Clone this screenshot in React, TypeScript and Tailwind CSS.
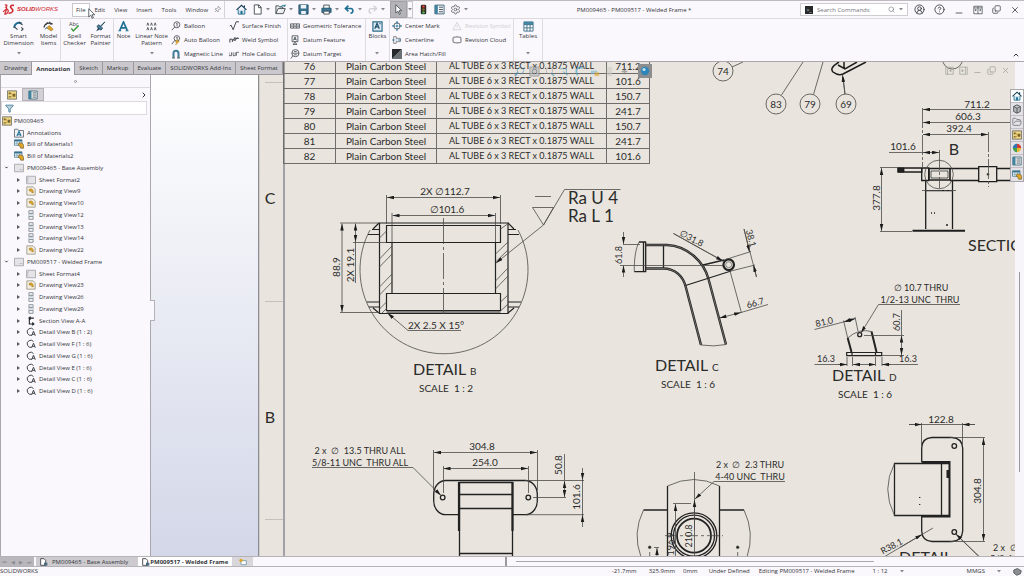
import { useState } from "react";
import type { ReactNode } from "react";
import { ChevronDown, ChevronRight, ChevronUp, CircleUserRound, CircleHelp, Copy, Filter, FolderOpen, Minus, Pin, Search, Settings, X } from "lucide-react";
import clsx from "clsx";

const BLUE = "#1f6f93";
const INK = "#444b52";
const GOLD = "#e0a526";

/* ---------- icons ---------- */

function Svg({ children, className = "size-[11px]" }: { children: ReactNode; className?: string }) {
  return (
    <svg viewBox="0 0 12 12" fill="none" stroke={INK} className={clsx("shrink-0", className)} aria-hidden="true">
      {children}
    </svg>
  );
}

const Caret = () => (
  <svg viewBox="0 0 4 3" className="w-[4px] h-[3px] shrink-0" aria-hidden="true"><path d="M0 0h4L2 2.6z" fill="#85888e" /></svg>
);

const HomeIcon = ({ className }: { className?: string }) => (
  <Svg className={className}>
    <path d="M2.4 6v5h7.2V6" fill="#d4e4ec" stroke={BLUE} />
    <path d="M.6 6.4 6 1.4l5.4 5M9.2 1.5v2" stroke="#173f56" strokeWidth="1.3" />
    <path d="M4.9 7.6h2.2V11H4.9z" fill={BLUE} stroke="none" />
  </Svg>
);
const NewIcon = () => <Svg><path d="M2.5 1h5L10 3.500V11H2.500zM7.200 1v3H10" fill="#fff" /></Svg>;
const OpenIcon = () => (
  <Svg>
    <path d="M1 10.500V2h3l1 1.200h3.500V5M1 10.500h8L11.200 5H3.400z" fill="#eceef0" />
    <path d="M6 3.500c1-2 3-2.500 4.800-1.500M11 .6v1.800H9.200" stroke={BLUE} />
  </Svg>
);
const SaveIcon = () => (
  <Svg>
    <path d="M1 1h10v10H1z" fill="#3a7390" stroke="#234f66" />
    <path d="M3 1h6v4H3zM3.500 7.500h5V11h-5z" fill="#eef4f7" stroke="none" />
  </Svg>
);
const PrintIcon = () => (
  <Svg>
    <path d="M3 5V1.200h6V5" fill="#fff" />
    <path d="M1 4.600h10v4.600H1z" fill="#3d7896" stroke="#24536b" />
    <path d="M3 7.800h6V11H3z" fill="#fff" />
  </Svg>
);
const UndoIcon = () => <Svg><path d="M2 5h5.500c3 0 3 5-.5 5M4.800 1.800 1.500 5l3.300 3" stroke={BLUE} strokeWidth="1.700" /></Svg>;
const RedoIcon = () => <Svg><path d="M10 5H4.500c-3 0-3 5 .5 5M7.200 1.800 10.500 5 7.200 8" stroke="#d0d0d4" strokeWidth="1.500" /></Svg>;
const PointerIcon = ({ className }: { className?: string }) => (
  <Svg className={className}><path d="M3 .8v9l2.200-2 1.500 3.500 1.400-.6-1.500-3.400h3z" fill="#fff" strokeWidth=".9" /></Svg>
);
const TrafficIcon = () => (
  <Svg>
    <rect x="3" y=".7" width="6" height="10.600" rx="1.500" fill="#2c2c2c" stroke="none" />
    <circle cx="6" cy="2.800" r="1.400" fill="#e03a2d" stroke="none" />
    <circle cx="6" cy="6" r="1.400" fill="#8a6c2d" stroke="none" />
    <circle cx="6" cy="9.200" r="1.400" fill="#4eb14a" stroke="none" />
  </Svg>
);
const PropsIcon = ({ className }: { className?: string }) => (
  <Svg className={className}>
    <path d="M1 1.200h10v9.600H1z" fill="#f2f6f8" stroke="#3e6478" />
    <path d="M1 1.200h3.200v9.600H1z" fill="#41839f" stroke="none" />
    <path d="M5.500 3.500h4.300M5.500 6h4.300M5.500 8.500h4.300" />
  </Svg>
);
const SpanIcon = () => <Svg className="size-[10px]"><path d="M1 1.500h10v9H1zM6 1.500v9M2.500 6h2M7.500 6h2M1 3.500h10M3.700 5 2.500 6l1.200 1M8.300 5l1.200 1-1.200 1" strokeWidth=".9" /></Svg>;
const PaneIcon = ({ flip }: { flip?: boolean }) => (
  <Svg className={clsx("size-[9px]", flip && "-scale-x-100")}><path d="M1 1.500h10v9.500H1zM3.500 1.500V11" stroke="#a3a19d" /><path d="M8.500 4 5.500 6.200l3 2.200z" fill="#a3a19d" stroke="none" /></Svg>
);
const DimensionIcon = () => (
  <Svg>
    <path d="M1.500 7.500A5 5 0 0 1 9.500 3" stroke={BLUE} strokeWidth="2.200" />
    <path d="m1 6 4 3.500M6.500 1l4 3.500M9 7l2 1.800-2 1.800" strokeWidth="1.200" />
  </Svg>
);
const ModelItemsIcon = () => (
  <Svg>
    <path d="M1 7C2 2.500 6 1 10.500 3.500" stroke="#30363c" strokeWidth="1.500" />
    <path d="m3 4 2-2.500M7 1l2 3" strokeWidth="1.300" />
    <path d="M4 7.500 7 5l4 4-2 2z" fill={GOLD} stroke="#806120" strokeWidth=".6" />
    <path d="m2 9 2.500-2" stroke={BLUE} />
  </Svg>
);
const SpellIcon = () => (
  <svg viewBox="0 0 12 12" className="size-[11px] shrink-0" aria-hidden="true">
    <text x="0" y="5" fontSize="6" fill="#3c4248">Abc</text>
    <path d="m2.500 8 2.200 2.800L10.500 5" fill="none" stroke="#3a9a38" strokeWidth="1.600" />
  </svg>
);
const PainterIcon = () => (
  <Svg>
    <path d="M10.800 1 6 5.500 4 4.200 2 6l4.500 4 1.700-2.200L6.500 6z" fill="#467f9c" stroke="#2b4c60" />
    <path d="m3.500 7-2.200 4.300 4-2" fill="#28465a" stroke="none" />
  </Svg>
);
const NoteIcon = () => (
  <Svg>
    <path d="M1.800 10.500 6 1l4.200 9.500M3.500 7.500h5" stroke={BLUE} strokeWidth="1.800" />
    <path d="M.4 10.700h3.200M8.200 10.700h3.400" stroke={BLUE} />
  </Svg>
);
const PatternIcon = () => (
  <Svg>
    <path d="m1 5 1-3 1 3M5 5l1-3 1 3M9 5l1-3 1 3M1 10l1-3 1 3M5 10l1-3 1 3M9 10l1-3 1 3" strokeWidth=".9" />
  </Svg>
);
const BalloonIcon = () => (
  <Svg className="size-[10px]"><circle cx="7" cy="4.500" r="3.600" /><path d="M4.500 7.200 1 11M6.400 3.300l.9-.7v4" /></Svg>
);
const AutoBalloonIcon = () => (
  <Svg className="size-[10px]">
    <circle cx="7" cy="4" r="3.300" />
    <path d="M4.500 6.500 1 11M6.400 3l.9-.7v3.500" />
    <path d="m8 5.500-3 3h2L5.500 12 10 7.500H8z" fill={GOLD} stroke="#b87f10" strokeWidth=".5" />
  </Svg>
);
const MagnetIcon = () => (
  <Svg className="size-[10px]">
    <path d="M3 10V5a3 3 0 0 1 6 0v5" stroke="#3f7c99" strokeWidth="2.400" />
    <path d="M1.500 10.500h3M7.500 10.500h3" strokeWidth="1.500" />
  </Svg>
);
const SurfaceIcon = () => <Svg className="size-[10px]"><path d="m1 6 1.500-1L5 10.500 8.500 1H12" strokeWidth="1.200" /></Svg>;
const WeldIcon = () => <Svg className="size-[10px]"><path d="M1 9V5h3v3l3-5v4l3-4M7 4h5" strokeWidth="1.200" /></Svg>;
const HoleIcon = () => <Svg className="size-[10px]"><path d="M0 4v4h3V4M5 4v4h2.500V4M9 8V4h3" strokeWidth=".9" /></Svg>;
const GeoTolIcon = () => (
  <Svg className="size-[10px]"><path d="M.5 3.500h11v5H.5zM4 3.500v5M8 3.500v5" /><path d="M1.500 6h1.500M5 6h2M9 6h1.500" strokeWidth="1.500" /></Svg>
);
const DatumIcon = () => (
  <Svg className="size-[10px]"><path d="M2.500 1h7v7h-7zM6 8v1.500M3.500 11.300h5L6 9z" /><path d="m4.200 6.500 1.800-4 1.800 4M5 5.200h2" strokeWidth="1.100" /></Svg>
);
const TargetIcon = () => <Svg className="size-[10px]"><circle cx="6.500" cy="5" r="4.300" /><path d="M2.200 5h8.600M3.500 8 1 11.500M5 3h3M5 7h3" /></Svg>;
const BlocksIcon = () => (
  <Svg>
    <path d="M1 1h10v10H1z" fill="#dceaf1" stroke="#2d6c8b" strokeWidth="1.300" />
    <path d="m3 8.500 2.500-6 2.500 6M4 6.500h3M8 3h1.500" stroke="#1c4d68" strokeWidth="1.300" />
  </Svg>
);
const CenterMarkIcon = () => (
  <Svg className="size-[10px]"><circle cx="6" cy="6" r="3.800" /><path d="M6 0v4M6 8v4M0 6h4M8 6h4M5 6h2M6 5v2" stroke={BLUE} strokeWidth="1.200" /></Svg>
);
const CenterlineIcon = () => (
  <Svg className="size-[10px]"><path d="M2 2v8M2 2h3v2h5v4H5v2H2" stroke="#70757a" /><path d="M0 6h3M4.500 6h1M7 6h4" stroke={BLUE} /></Svg>
);
const HatchIcon = () => (
  <Svg className="size-[10px]"><path d="M0 0h12v12H0z" fill="#26292c" stroke="none" /><path d="M12 0v12H0z" fill="#6b7074" stroke="none" /><path d="M0 12 12 0" stroke="#9da2a6" strokeWidth=".6" /></Svg>
);
const RevSymbolIcon = () => <Svg className="size-[10px]"><path d="M6 1.500 11 10.500H1zM6 5v3" stroke="#d0d0d4" /></Svg>;
const CloudIcon = () => <Svg className="size-[10px]"><path d="M1.500 3c1-1 2 0 3-.5s2-.5 3 0 2-.5 3 .5c.6 1 0 2 .2 3s.4 2-.4 3c-1 .6-2 0-3 .3s-2 .4-3 0-2 .4-2.700-.5C1 7.800 1.300 7 1.300 6S.9 4 1.500 3z" /></Svg>;
const TablesIcon = () => (
  <Svg>
    <path d="M1 1h10v10H1z" fill="#fff" stroke="#3d6f88" />
    <path d="M1 1h10v3H1z" fill="#4487a5" stroke="none" />
    <path d="M1 4h10M1 7.500h10M4.300 4v7M7.700 4v7" stroke="#3d6f88" />
  </Svg>
);
const SheetRootIcon = ({ className = "size-[10px]" }: { className?: string }) => (
  <Svg className={className}>
    <path d="M.5 1h11v10H.5z" fill="#ecd484" stroke="#6b6a60" />
    <path d="M2 3h2.500v2H2zM2 7.500h2.500v1.500H2zM7 4.500h3V8H7z" fill="#77632f" stroke="none" />
    <path d="M4.500 4c2 0 1 2.500 2.500 2.500M4.500 8c1.500 0 1.500-1 2.500-1.500" stroke="#b5882a" />
  </Svg>
);
const AnnotationsIcon = () => (
  <Svg className="size-[10px]"><path d="M.6 1.500h4l1 1.500h5.800v8H.6z" fill="#eef2f5" stroke="#60666c" /><path d="M3.500 9.500 6 4l2.500 5.500M4.500 8h3" stroke={BLUE} strokeWidth="1.300" /></Svg>
);
const BomIcon = ({ className = "size-[10px]" }: { className?: string }) => (
  <Svg className={className}>
    <path d="M.6 1h9v6.500h-9z" fill="#fff" stroke="#4b7d96" />
    <path d="M.6 1h9v2h-9z" fill="#35708d" stroke="none" />
    <path d="M3.500 3v4M6.500 3v4M.6 5h9" stroke="#4b7d96" strokeWidth=".7" />
    <path d="M6 5c3-1 5.500.5 5.500 3v3H8c-.5-2-1-3-3-3.500z" fill={GOLD} stroke="#6b5a2c" strokeWidth=".8" />
  </Svg>
);
const SheetIcon = () => <Svg className="size-[10px]"><path d="M.6 1.500h10.800v9H.6z" fill="#e4e3e6" stroke="#a4a3a8" /><path d="M6.500 8h4" stroke="#b8b7bb" /></Svg>;
const FormatIcon = () => <Svg className="size-[10px]"><path d="M.6 1.500h10.800v9H.6z" fill="#e4e3e6" stroke="#a4a3a8" /><path d="M2 9V3.500h1.500" stroke="#b8b7bb" /></Svg>;
const ModelViewIcon = () => (
  <Svg className="size-[10px]"><path d="M1 1h7.500L11 3.500V11H1z" fill="#f5eede" stroke="#98958c" /><path d="M4 4c3-1.500 5 .5 4.800 4L7 8c0-1-1-2-3-2z" fill={GOLD} stroke="#8a6b22" strokeWidth=".6" /></Svg>
);
const ProjectedIcon = () => (
  <Svg className="size-[10px]"><path d="M3.500.8h5v3.500h-5zM3.500 7.700h5v3.500h-5z" fill="#f2f4f6" stroke="#80868b" /><path d="M6 3v6M3.500 4.500v3M8.500 4.500v3" stroke="#6f8f9f" strokeDasharray="1 1" /></Svg>
);
const SectionIcon = () => <Svg className="size-[10px]"><path d="M9.500 2.500H4v7h5.500M5.500.8 3.500 2.500l2 1.700M7.500 7.800l2 1.700-2 1.700" stroke="#22272b" strokeWidth="1.300" /></Svg>;
const DetailIcon = () => (
  <Svg className="size-[10px]"><path d="M7 9.900A4.300 4.300 0 1 1 9 3" stroke="#33383c" strokeWidth="1.100" /><path d="m6.800 10.500 2.200-5.500 2.200 5.500M7.600 8.800h2.800" stroke="#33383c" strokeWidth="1.100" /></Svg>
);
const SheetTabIcon = () => (
  <Svg className="size-[8px]"><path d="M1 1h5l2.500 2.500V11H1z" fill="#fff" stroke="#3a3e42" strokeWidth="1.300" /><path d="M6 7h5v4.500H6z" fill="#4a6b7d" stroke="none" /></Svg>
);

function Logo() {
  return (
    <a href="#" className="flex items-center gap-[2px] text-[#cf2b30]">
      <svg viewBox="0 0 14 12" className="w-[13px] h-[11px]" fill="none" stroke="currentColor" strokeWidth="1.300" aria-hidden="true">
        <path d="M3 1.200c2-.8 3.500.3 1 2.300C6 4 5 6 1 8.500" />
        <path d="M5 5.500 3 11c3 .5 5.500-4.500 2-5.500z" />
        <path d="M13 1.500C9 1 8 3 10.500 5s1 5-3.500 5" strokeWidth="1.700" />
      </svg>
      <span className="text-[6px] leading-[9px] italic font-[Liberation_Sans]"><b>SOLID</b>WORKS</span>
    </a>
  );
}

/* ---------- title bar ---------- */

const menus = ["File", "Edit", "View", "Insert", "Tools", "Window"];

function Quick({ label, caret, children }: { label: string; caret?: boolean; children: ReactNode }) {
  return (
    <button aria-label={label} className="flex items-center gap-[3px]">
      {children}
      {caret && <Caret />}
    </button>
  );
}

function TitleBar() {
  return (
    <header className="flex items-center h-[19px] border-y border-t-[#bdbbc0] border-b-[#dddbe0] pl-[2px] pr-1">
      <Logo />
      <nav className="relative flex items-center gap-px ml-[14px]">
        {menus.map((m) => (
          <button key={m} className={clsx("px-[3px] h-[14px] border", m === "File" ? "border-[#c9c7cc] bg-white" : "border-transparent")}>{m}</button>
        ))}
        <PointerIcon className="absolute left-[14px] top-[5px] size-[11px]" />
        <Pin className="size-[7px] ml-px rotate-45 text-[#6d7177]" />
      </nav>
      <div className="flex items-center gap-[5px] ml-[3px] pl-[11px] border-l border-[#d5d3d8] h-full">
        <Quick label="Home"><HomeIcon /></Quick>
        <Quick label="New" caret><NewIcon /></Quick>
        <Quick label="Open" caret><OpenIcon /></Quick>
        <Quick label="Save" caret><SaveIcon /></Quick>
        <Quick label="Print" caret><PrintIcon /></Quick>
        <Quick label="Undo" caret><UndoIcon /></Quick>
        <Quick label="Redo" caret><RedoIcon /></Quick>
        <button aria-label="Select" className="flex items-center h-[17px]">
          <span className="flex h-full items-center bg-[#b4b3b7] border border-[#a3a2a6] px-[2px]"><PointerIcon /></span>
          <span className="flex h-full items-center border border-[#c8c6cb]"><Caret /></span>
        </button>
        <Quick label="Rebuild"><TrafficIcon /></Quick>
        <Quick label="File Properties"><PropsIcon /></Quick>
        <Quick label="Options" caret><Settings className="size-[11px] text-[#6b6f75]" /></Quick>
      </div>
      <h1 className="flex-1 text-center">PM009465 - PM009517 - Welded Frame *</h1>
      <label className="flex items-center gap-1 w-[108px] h-[13px] px-1 border border-[#cfcdd2] bg-white">
        <span className="size-[8px] bg-[#26292c] text-white text-[5px] leading-[8px] text-center">&gt;_</span>
        <input aria-label="Search Commands" placeholder="Search Commands" className="flex-1 min-w-0 outline-none placeholder:text-[#77757c]" />
        <Search className="size-[7px] text-[#6d7177]" />
        <Caret />
      </label>
      <div className="flex items-center gap-[9px] ml-[6px] text-[#3f4348]">
        <button aria-label="Account"><CircleUserRound className="size-[11px]" /></button>
        <button aria-label="Help"><CircleHelp className="size-[11px]" /></button>
        <button aria-label="Minimize"><Minus className="size-[10px] translate-y-[3px]" /></button>
        <button aria-label="Span displays"><SpanIcon /></button>
        <button aria-label="Restore"><Copy className="size-[9px] -scale-y-100" /></button>
        <button aria-label="Close"><X className="size-[10px]" /></button>
      </div>
    </header>
  );
}

/* ---------- ribbon ---------- */

function BigTool({ icon, lines, caret, className }: { icon: ReactNode; lines: string[]; caret?: boolean; className?: string }) {
  return (
    <button className={clsx("relative flex flex-col items-center leading-[7px] pt-[2px] h-full", className)}>
      {icon}
      <span className="mt-[1px]">{lines.map((l) => <span key={l} className="block whitespace-nowrap">{l}</span>)}</span>
      {caret && <span className="mt-auto mb-[6px]"><Caret /></span>}
    </button>
  );
}

function ToolColumn({ items, className }: { items: [ReactNode, string, boolean?][]; className?: string }) {
  return (
    <div className={clsx("grid grid-rows-3 h-[42px]", className)}>
      {items.map(([icon, label, off]) => (
        <button key={label} disabled={off} className={clsx("flex items-center gap-[3px] whitespace-nowrap", off && "text-[#cfcdd2]")}>
          {icon}{label}
        </button>
      ))}
    </div>
  );
}

function Ribbon() {
  return (
    <div className="relative flex h-[43px] border-b border-[#a9a7ac]">
      <div className="flex w-[61px] border-r border-[#dddbe0]">
        <BigTool className="w-[37px]" icon={<DimensionIcon />} lines={["Smart", "Dimension"]} caret />
        <BigTool className="w-[23px]" icon={<ModelItemsIcon />} lines={["Model", "Items"]} />
      </div>
      <div className="flex w-[53px] border-r border-[#dddbe0]">
        <BigTool className="w-[27px]" icon={<SpellIcon />} lines={["Spell", "Checker"]} />
        <BigTool className="w-[25px]" icon={<PainterIcon />} lines={["Format", "Painter"]} />
      </div>
      <div className="flex w-[174px] border-r border-[#dddbe0]">
        <BigTool className="w-[19px]" icon={<NoteIcon />} lines={["Note"]} />
        <BigTool className="w-[37px]" icon={<PatternIcon />} lines={["Linear Note", "Pattern"]} caret />
        <ToolColumn className="w-[59px] pl-px" items={[[<BalloonIcon />, "Balloon"], [<AutoBalloonIcon />, "Auto Balloon"], [<MagnetIcon />, "Magnetic Line"]]} />
        <ToolColumn items={[[<SurfaceIcon />, "Surface Finish"], [<WeldIcon />, "Weld Symbol"], [<HoleIcon />, "Hole Callout"]]} />
      </div>
      <div className="w-[78px] border-r border-[#dddbe0] pl-[2px]">
        <ToolColumn items={[[<GeoTolIcon />, "Geometric Tolerance"], [<DatumIcon />, "Datum Feature"], [<TargetIcon />, "Datum Target"]]} />
      </div>
      <div className="flex justify-center w-[24px] border-r border-[#dddbe0]">
        <BigTool icon={<BlocksIcon />} lines={["Blocks"]} caret />
      </div>
      <div className="flex w-[124px] border-r border-[#dddbe0] pl-[2px]">
        <ToolColumn className="w-[60px]" items={[[<CenterMarkIcon />, "Center Mark"], [<CenterlineIcon />, "Centerline"], [<HatchIcon />, "Area Hatch/Fill"]]} />
        <ToolColumn items={[[<RevSymbolIcon />, "Revision Symbol", true], [<CloudIcon />, "Revision Cloud"]]} />
      </div>
      <div className="flex justify-center w-[29px] border-r border-[#dddbe0]">
        <BigTool icon={<TablesIcon />} lines={["Tables"]} caret />
      </div>
      <button aria-label="Collapse ribbon" className="ml-auto mt-auto mr-1 mb-[2px]"><ChevronUp className="size-[8px]" strokeWidth={3} /></button>
    </div>
  );
}

const tabs = ["Drawing", "Annotation", "Sketch", "Markup", "Evaluate", "SOLIDWORKS Add-Ins", "Sheet Format"];

function CommandTabs() {
  const [active, setActive] = useState("Annotation");
  return (
    <div role="tablist" className="relative z-10 flex w-max h-[13px]">
      {tabs.map((t) => (
        <button
          key={t}
          role="tab"
          aria-selected={t === active}
          onClick={() => setActive(t)}
          className={clsx("px-[4px] whitespace-nowrap border-r border-[#9b999e]", t === active ? "bg-[#faf8fc] font-bold" : "bg-[#cac8cc] border-b")}
        >
          {t}
        </button>
      ))}
    </div>
  );
}

/* ---------- feature tree ---------- */

type Node = { label: string; icon: ReactNode; level: number; state?: "open" | "closed" };

const views = (names: string[], icon: ReactNode): Node[] => names.map((n) => ({ label: n, icon, level: 2, state: "closed" }));

const tree: Node[] = [
  { label: "PM009465", icon: <SheetRootIcon />, level: 0 },
  { label: "Annotations", icon: <AnnotationsIcon />, level: 1 },
  { label: "Bill of Materials1", icon: <BomIcon />, level: 1 },
  { label: "Bill of Materials2", icon: <BomIcon />, level: 1 },
  { label: "PM009465 - Base Assembly", icon: <SheetIcon />, level: 1, state: "open" },
  ...views(["Sheet Format2"], <FormatIcon />),
  ...views(["Drawing View9", "Drawing View10"], <ModelViewIcon />),
  ...views(["Drawing View12", "Drawing View13", "Drawing View14"], <ProjectedIcon />),
  ...views(["Drawing View22"], <ModelViewIcon />),
  { label: "PM009517 - Welded Frame", icon: <SheetIcon />, level: 1, state: "open" },
  ...views(["Sheet Format4"], <FormatIcon />),
  ...views(["Drawing View23"], <ModelViewIcon />),
  ...views(["Drawing View26", "Drawing View29"], <ProjectedIcon />),
  ...views(["Section View A-A"], <SectionIcon />),
  ...views(["Detail View B (1 : 2)", "Detail View F (1 : 6)", "Detail View G (1 : 6)", "Detail View E (1 : 6)", "Detail View C (1 : 6)", "Detail View D (1 : 6)"], <DetailIcon />),
];

const indent = ["pl-px", "pl-[3px]", "pl-[15px]"];

function TreePanel() {
  return (
    <aside className="relative w-[151px] shrink-0 bg-[#faf8fc] border-x border-[#aaa8ad]">
      <div className="flex justify-center items-center h-[12px]"><span className="size-[3px] rounded-full border border-[#96949a]" /></div>
      <div className="flex h-[14px] border-t border-[#dcdadf]">
        <button aria-label="Feature tree" className="w-[21px] flex justify-center items-center"><SheetRootIcon /></button>
        <button aria-label="Properties" className="w-[22px] flex justify-center items-center bg-[#d2d0d5] border border-[#b4b2b7]"><PropsIcon className="size-[10px]" /></button>
        <button aria-label="More tabs" className="ml-auto mr-[2px]"><ChevronRight className="size-[8px]" strokeWidth={3} /></button>
      </div>
      <label className="flex items-center h-[14px] mr-[3px] pl-[3px] border border-[#dcdadf] bg-white">
        <Filter className="size-[9px] text-[#2d6c8b] fill-[#b9d2de]" />
        <input aria-label="Filter" className="flex-1 min-w-0 outline-none" />
      </label>
      <ul className="grid auto-rows-fr h-[282px]">
        {tree.map((n) => (
          <li key={n.label} className={clsx("flex items-center whitespace-nowrap", indent[n.level])}>
            {n.level > 0 && (
              <span className="w-[10px]">
                {n.state === "open" && <ChevronDown className="size-[5px] fill-[#55595e]" />}
                {n.state === "closed" && <svg viewBox="0 0 3 4" className="w-[3px] h-[4px] ml-px"><path d="M0 0l3 2-3 2z" fill="#55595e" /></svg>}
              </span>
            )}
            {n.icon}
            <span className={n.level ? "ml-[3px]" : "ml-[2px]"}>{n.label}</span>
          </li>
        ))}
      </ul>
      <button aria-label="Collapse panel" className="absolute -right-[5px] top-[225px] w-[5px] h-[21px] border border-l-0 border-[#b4b2b7] bg-[#faf8fc]" />
    </aside>
  );
}

/* ---------- drawing sheet ---------- */

type TextProps = { x: number; y: number; children: ReactNode; r?: number; size?: string; start?: boolean };

function T({ x, y, children, r, size = "text-[10px]", start }: TextProps) {
  return (
    <text x={x} y={y} textAnchor={start ? "start" : "middle"} transform={r ? `rotate(${r} ${x} ${y})` : undefined} className={size} fill="#2b2b2b" stroke="none" xmlSpace="preserve">
      {children}
    </text>
  );
}

const NOTE = "text-[9px]";

const Arrow = ({ d, both }: { d: string; both?: boolean }) => <path d={d} markerEnd="url(#arrow)" markerStart={both ? "url(#arrow)" : undefined} />;

function Caption({ x, y, letter, scale }: { x: number; y: number; letter: string; scale: string }) {
  return (
    <>
      <T x={x} y={y} size="text-[16px]" start>DETAIL <tspan className="text-[10px]">{letter}</tspan></T>
      <T x={x + 6} y={y + 17} start>SCALE  {scale}</T>
    </>
  );
}

function Balloon({ x, y, n }: { x: number; y: number; n: string }) {
  return (
    <>
      <circle cx={x} cy={y} r="10" />
      <T x={x} y={y + 4}>{n}</T>
    </>
  );
}

function DetailB() {
  return (
    <g>
      <path d="M370 230A84 84 0 1 0 518 230" />
      <g strokeWidth="1.200" stroke="#222">
        <path d="M379.500 223H508V313.500H379.500zM386.500 225.500H500.500V242.500H386.500zM392 242.500V293.500M495.500 242.500V293.500M386.500 293.500H500.500V310.500H386.500zM386.500 312H500.500" />
        <path d="M372 229.500h7.500M368 234.500h11.500M508 229.500h8M508 234.500h11M367 302h12.500M369 307h10.500M508 302h13M508 307h11M373 229l6-6M508 223l6 6M373 308l6 5M508 313l6-5" />
      </g>
      <path d="M379.500 238l7-7M379.500 259l12.500-13M379.500 267l12.500-13M379.500 287l12.500-13M379.500 295l12.500-13M379.500 309l7-7M382 313l5-5M500.500 229l7-5M495.500 254l12.500-12M495.500 262l12.500-12M495.500 281l12.500-13M495.500 289l12.500-13M500.500 302l7.500-7M500.500 311l7.500-7" />
      <path d="M443.500 218V317" strokeDasharray="26 3 3 3" />
      <path d="M340 223h39M340 312.500h39M353 242.500h33M386.500 195V224M500.500 195V224M392 213V242M495.500 213V242M355.500 242V283" />
      <Arrow d="M342 223.500V312" both /><Arrow d="M355.500 223.500V242" both />
      <Arrow d="M387 197.500H500" both /><Arrow d="M392.500 215.500H495" both />
      <T x={445} y={195}>2X ∅112.7</T>
      <T x={447} y={213}>∅101.6</T>
      <T x={340} y={267} r={-90}>88.9</T>
      <T x={354} y={265} r={-90}>2X 19.1</T>
      <path d="M535 196.500h16M532.500 207.500h21L543.500 225zM543.500 225 564.500 189.500H620.500" />
      <Arrow d="M543.500 225 496 263" />
      <T x={568} y={204} size="text-[17px]" start>Ra U 4</T>
      <T x={568} y={222} size="text-[17px]" start>Ra L 1</T>
      <path d="M408 330.500h53" /><Arrow d="M408 330.500 387.500 313" />
      <T x={408} y={329} start>2X 2.5 X 15°</T>
      <Caption x={413} y={375} letter="B" scale="1 : 2" />
    </g>
  );
}

function DetailC() {
  return (
    <g>
      <g stroke="#222" strokeWidth="1.300">
        <path d="M645.700 241.700V271.700H634.300M643.500 242V271.500M639 242h7" />
        <path d="M663.500 244.500V269" />
        <path d="M646 245H667C688 246 704 262 708.500 279L726 344.500M646 268.500H663C676 268.500 683 277 685.500 286L701 345" strokeWidth="2.400" />
        <path d="M646 245H667C688 246 704 262 708.500 279L726 344.500M646 268.500H663C676 268.500 683 277 685.500 286L701 345" stroke="#9a9893" strokeWidth=".6" />
        <path d="M685.500 285.500 731 271M703 265 724 260" />
        <circle cx="728.700" cy="264.700" r="5.300" strokeWidth="2.200" />
        <circle cx="728.700" cy="264.700" r="3" strokeWidth=".5" />
      </g>
      <path d="M634.300 271.700C634 258 636 248 639 242M701 345Q714 347 726 344.500M623 244.500h17M620 265.500H723M673.500 233.500 723 261M724 260 751 251.500M731 271 755 265M744 229 756.500 277M730 271 741.500 313M741 312.500 768 304.500" />
      <Arrow d="M623.500 232V244" /><Arrow d="M623.500 277V265.500" />
      <Arrow d="M673.500 233.500 723 261" /><Arrow d="M744 229 749.500 252" /><Arrow d="M756.500 277 753.500 265" />
      <Arrow d="M719.500 318 741 312.500" both />
      <T x={622} y={255} r={-90} size={NOTE}>61.8</T>
      <T x={690} y={241} r={28} size={NOTE}>∅31.8</T>
      <T x={748} y={239} r={75} size={NOTE}>38.1</T>
      <T x={756} y={306} r={-15} size={NOTE}>66.7</T>
      <Caption x={655} y={371} letter="C" scale="1 : 6" />
    </g>
  );
}

function DetailD() {
  return (
    <g>
      <path d="M847.700 338 851.500 352M871.500 331.500 876.500 352" stroke="#222" strokeWidth="2" />
      <path d="M846.700 352.500h35v3.200h-35zM852 352v4M875.500 352v4" stroke="#222" strokeWidth="1.200" />
      <circle cx="859.700" cy="334.700" r="2" stroke="#222" strokeWidth="1.300" />
      <path d="M847.700 338Q859 328 871.500 331.500M843.500 320.500 847.700 338M855 317l3 14M814.500 329.500 843.500 322M864 335.500h40M882 355.500h22M901.500 310V335M878.500 304.500H960M814.500 364.500H847M882 364.500H918M847 357v9M852.500 357v9M875.500 357v9M882 357v9" />
      <Arrow d="M843.500 322 855.500 318.500" both /><Arrow d="M878.500 304.500 861 333" />
      <Arrow d="M901.500 335.500V355" both /><Arrow d="M838 364.500h9" /><Arrow d="M853 364.500h22.500" both /><Arrow d="M891 364.500h-9" />
      <T x={825} y={325} r={-13} size={NOTE}>81.0</T>
      <T x={900} y={322} r={-90} size={NOTE}>60.7</T>
      <T x={826} y={362} size={NOTE}>16.3</T>
      <T x={908} y={362} size={NOTE}>16.3</T>
      <T x={921} y={291} size={NOTE}>∅ 10.7 THRU</T>
      <T x={920} y={303} size={NOTE}>1/2-13 UNC  THRU</T>
      <Caption x={832} y={381} letter="D" scale="1 : 6" />
    </g>
  );
}

function SectionView() {
  return (
    <g>
      <g stroke="#1d1d1d">
        <path d="M898 168h24v4h-24zM921.700 168h7v12.500h-7zM925.700 181V229M952.500 181V229M925.700 190.700h26.800" strokeWidth="1.300" />
        <path d="M898 168h6v4h-6z" fill="#222" />
        <path d="M929 168.500h21v11.500h-21zM950 168.500h29M997 168.500h18M950 180.500h29M997 180.500h18" strokeWidth="1.600" />
        <path d="M978.700 166.700h18v15h-18z" strokeWidth="1.300" />
        <path d="M931 171h17v7h-17z" strokeWidth=".7" />
        <path d="M912.500 230.800H965" strokeWidth="2" />
        <path d="M931 213h1M934 213h1M946 225h2" strokeWidth="1.600" />
      </g>
      <circle cx="939" cy="174.500" r="14.300" />
      <circle cx="988" cy="174.300" r="1" fill="#222" />
      <path d="M922.500 108V167M939.500 150V188M988.500 132V187M922 190.500h34" strokeDasharray="20 2 3 2" />
      <path d="M880 167.500h18M880 231.500h32M889 152.500h34" />
      <Arrow d="M1015 109.500H923" /><Arrow d="M1015 122.500H923" /><Arrow d="M923 134.500H988" both /><Arrow d="M923 152.500H939" both />
      <Arrow d="M881.500 168V231" both />
      <T x={977} y={108}>711.2</T>
      <T x={968} y={120}>606.3</T>
      <T x={959} y={132}>392.4</T>
      <T x={903} y={150}>101.6</T>
      <T x={880} y={198} r={-90}>377.8</T>
      <T x={954} y={155} size="text-[16px]">B</T>
      <T x={968} y={251} size="text-[16px]" start>SECTION</T>
    </g>
  );
}

function BasePlate() {
  return (
    <g>
      <g stroke="#222" strokeWidth="1.300">
        <path d="M459 514.700H446A12 14 0 0 1 433.700 500V494A12 14 0 0 1 446 480.500H525A12 14 0 0 1 537.300 494V500A12 14 0 0 1 525 514.700H512" />
        <path d="M459.500 482.500H512.500V557M459.500 482.500V557M459.500 494.500h53M459.500 508.500h53M459.500 553.500h53" />
        <path d="M459 482V531M512.500 482V531" strokeWidth="2.200" />
        <circle cx="442.700" cy="497.500" r="2.300" /><circle cx="528.300" cy="497.500" r="2.300" />
      </g>
      <path d="M433.500 450V490M537.500 450V490M443.500 466V493M528.500 466V493M533 497.500h33M525 480.500h59M525 514.700h59M564.500 454V480M582.500 480V515M312 467.500H413" />
      <Arrow d="M434 452.500H537" both /><Arrow d="M443.500 468.500H528" both /><Arrow d="M564.500 481V497" both />
      <Arrow d="M582.500 468V480" /><Arrow d="M582.500 527V515" /><Arrow d="M413 467.500 441 495.500" />
      <T x={482} y={450}>304.8</T>
      <T x={485} y={466}>254.0</T>
      <T x={562} y={465} r={-90}>50.8</T>
      <T x={580} y={497} r={-90}>101.6</T>
      <T x={360} y={454} size={NOTE}>2 x  ∅  13.5 THRU ALL</T>
      <T x={360} y={466} size={NOTE}>5/8-11 UNC  THRU ALL</T>
    </g>
  );
}

function FrontView() {
  return (
    <g>
      <g stroke="#222" strokeWidth="1.300">
        <path d="M667.500 557V486M719.500 557V486M667.500 510H643.500M719.500 510H744" />
        <circle cx="694" cy="535.700" r="22.800" /><circle cx="694" cy="535.700" r="20.500" /><circle cx="694" cy="535.700" r="17" strokeWidth="1.800" />
      </g>
      <path d="M667.500 486Q694 473 719.500 486M643.500 510Q632 533 641 557M744 510Q755 533 747 557M694.500 472V557M673 503.500h18M714 481.500H785" />
      <path d="M665 535.700h58" strokeDasharray="12 3 3 3" />
      <circle cx="649.700" cy="547.300" r="1.300" fill="#222" /><circle cx="737.700" cy="547.300" r="1.300" fill="#222" />
      <path d="M649.700 552v5M737.700 552v5M654 547.500h5" />
      <Arrow d="M657 557V548" /><Arrow d="M675.500 557V504" /><Arrow d="M694.500 530V500" /><Arrow d="M714 481.500 695 499" />
      <T x={692} y={536} r={-90} size={NOTE}>210.8</T>
      <T x={674} y={544} r={-90} size={NOTE}>196.9</T>
      <T x={750} y={468} size={NOTE}>2 x  ∅  2.3 THRU</T>
      <T x={750} y={480} size={NOTE}>4-40 UNC  THRU</T>
    </g>
  );
}

function SidePlate() {
  return (
    <g>
      <g stroke="#222" strokeWidth="1.300">
        <path d="M921.700 462V448Q922 438 932 437.500H952Q962 438 962.700 448V531Q962 541 952 541.500H932Q922 541 921.700 531V516" />
        <path d="M949 463.500H894.500V515.500H949M941.500 463.500V515.500" />
        <path d="M921.700 462H949.500V516.500H921.700M947.500 470v8" strokeWidth="2" />
        <circle cx="954.300" cy="446" r="2.300" /><circle cx="954.300" cy="532" r="2.300" />
        <path d="M919.700 497v1M919.700 504v1" />
      </g>
      <path d="M894.500 463.500Q881 489 894.500 515.500M921.500 423V446M962.500 423V446M909 424.500H975M950 437.500h35M950 541.500h35M883 557.500 933 528M955.500 534 979.500 557" />
      <Arrow d="M909 424.500h12.500" /><Arrow d="M975 424.500h-12.500" /><Arrow d="M983.500 438V541" both />
      <Arrow d="M900 547.500 922 534.500" /><Arrow d="M979.500 557 956 534" />
      <T x={941} y={423}>122.8</T>
      <T x={981} y={491} r={-90}>304.8</T>
      <T x={893} y={549} r={-28} size={NOTE}>R38.1</T>
      <T x={899} y={563} size="text-[16px]" start>DETAIL <tspan className="text-[10px]">E</tspan></T>
      <T x={993} y={551} size={NOTE} start>2 x  ∅</T>
      <T x={990} y={562} size={NOTE} start>5/8-11</T>
    </g>
  );
}

function Sheet() {
  return (
    <svg viewBox="258 62 757 495" preserveAspectRatio="xMinYMin slice" className="block w-full h-full" fill="none" stroke="#4a4a48" strokeWidth=".8">
      <defs>
        <marker id="arrow" viewBox="0 0 8 4" refX="8" refY="2" markerWidth="7" markerHeight="4" markerUnits="userSpaceOnUse" orient="auto-start-reverse">
          <path d="M0 0 8 2 0 4z" fill="#1c1c1c" stroke="none" />
        </marker>
      </defs>
      <path d="M258.500 62V557M284 62V557" stroke="#8c8b92" strokeWidth="1.500" />
      <path d="M265 82.500h18M265 301.500h18M265 519.500h18" stroke="#bab8b4" />
      <T x={270} y={204} size="text-[16px]">C</T>
      <T x={270} y={423} size="text-[16px]">B</T>
      <Balloon x={723} y={71} n="74" />
      <Balloon x={776} y={104} n="83" />
      <Balloon x={810} y={104} n="79" />
      <Balloon x={846} y={104} n="69" />
      <circle cx="952.500" cy="59" r="10" />
      <path d="M732 67 743 62M781.500 95 803 62M813.500 94.500 823 62M845 94 843 77" />
      <Arrow d="M845 94 842.500 75" />
      <path d="M839 62Q829 68 833 72Q838 76 843 74L866 62M838 65l7 4 12-7M844 62v7" stroke="#1c1c1c" strokeWidth="1.500" />
      <DetailB />
      <DetailC />
      <DetailD />
      <SectionView />
      <BasePlate />
      <FrontView />
      <SidePlate />
    </svg>
  );
}

const bom = [
  ["76", "711.2"],
  ["77", "101.6"],
  ["78", "150.7"],
  ["79", "241.7"],
  ["80", "150.7"],
  ["81", "241.7"],
  ["82", "101.6"],
];

function BomTable() {
  return (
    <table className="absolute left-[25px] -top-[4px] w-[367px] table-fixed border-collapse text-center text-[10px] leading-[14px] text-[#2b2b2b]">
      <colgroup>
        <col className="w-[52px]" /><col className="w-[101px]" /><col className="w-[170px]" /><col />
      </colgroup>
      <tbody>
        {bom.map(([item, length]) => (
          <tr key={item} className="h-[15px]">
            {[item, "Plain Carbon Steel", "AL TUBE 6 x 3 RECT x 0.1875 WALL", length].map((c, i) => (
              <td key={i} className={clsx("border border-[#6e6d6b] p-0 whitespace-nowrap", i === 2 && "text-[9px]")}>{c}</td>
            ))}
          </tr>
        ))}
      </tbody>
    </table>
  );
}

function ViewToolbar() {
  return (
    <div className="absolute left-[256px] top-[2px] flex items-center gap-[8px]">
      <div className="flex items-center gap-[4px] opacity-60">
        <Svg><circle cx="7" cy="5" r="3.500" stroke="#3d88b0" /><path d="m4 7-3 4" stroke="#3d88b0" strokeWidth="2" /></Svg>
        <Svg><path d="M1 1h10v10H1z" fill="#b7bcbf" stroke="#777" /><circle cx="6" cy="6" r="2.500" /></Svg>
        <Svg><circle cx="6" cy="5" r="3.500" stroke="#999" /><path d="m8 8 3 3" stroke="#3d88b0" strokeWidth="1.500" /></Svg>
        <Svg><path d="M1 3h7v7M4 6l6 4" stroke="#3d88b0" /></Svg>
        <Svg><path d="M10 2C3 0 1 5 4 10" stroke="#3d9ccc" strokeWidth="2" /></Svg>
        <Svg><path d="M2 5h7v4H2z" fill="#7cb3d1" stroke="none" /><path d="M6 7h5v4H6z" fill={GOLD} stroke="none" /></Svg>
        <Svg><path d="M3 1h6v10H3z" fill="#cfcdc8" stroke="none" /></Svg>
        <Svg><path d="M6 3v6M3 6h6" stroke="#777" strokeWidth="1.500" /></Svg>
      </div>
      <button aria-label="View settings" className="flex items-center justify-center size-[14px] bg-[#8b8d8f]">
        <svg viewBox="0 0 10 10" className="size-[10px]"><circle cx="5" cy="5" r="4.200" fill="#2c86b8" /><circle cx="4" cy="3.500" r="1.600" fill="#bfe2f2" /></svg>
      </button>
    </div>
  );
}

const paneTabs: [string, ReactNode][] = [
  ["Resources", <HomeIcon className="size-[10px]" />],
  ["Design Library", <Svg className="size-[10px]"><path d="M2 3l4-2 4 2v6l-4 2-4-2zM2 3l4 2 4-2M6 5v6" fill="#b3b5b8" /></Svg>],
  ["File Explorer", <FolderOpen className="size-[10px] text-[#74787c]" />],
  ["View Palette", <SheetRootIcon />],
  ["Appearances", <svg viewBox="0 0 12 12" className="size-[10px]"><path d="M6 6V1a5 5 0 0 1 5 5z" fill="#d23c33" /><path d="M6 6h5a5 5 0 0 1-5 5z" fill="#e7b93a" /><path d="M6 6v5a5 5 0 0 1-5-5z" fill="#47a04b" /><path d="M6 6H1a5 5 0 0 1 5-5z" fill="#2f77b5" /></svg>],
  ["Custom Properties", <PropsIcon className="size-[10px]" />],
  ["Drawing Tables", <BomIcon />],
];

function Canvas() {
  return (
    <main className="relative flex-1 min-w-0 overflow-hidden bg-[#e9e5de] font-[Lato]">
      <Sheet />
      <BomTable />
      <ViewToolbar />
      <div className="absolute right-[5px] top-[4px] flex items-center gap-[5px] text-[#a3a19d]">
        <button aria-label="Previous pane"><PaneIcon /></button>
        <button aria-label="Next pane"><PaneIcon flip /></button>
        <button aria-label="Minimize sheet"><Minus className="size-[9px] translate-y-[2px]" /></button>
        <button aria-label="Restore sheet"><Copy className="size-[9px] -scale-y-100" /></button>
        <button aria-label="Close sheet"><X className="size-[9px]" /></button>
      </div>
    </main>
  );
}

function TaskPane() {
  return (
    <aside className="relative w-[9px] bg-[#f7f5f9]">
      <div className="absolute right-0 top-[27px] w-[14px] border border-[#a9a7ac] bg-[#e4e2e6]">
        {paneTabs.map(([label, icon], i) => (
          <button key={label} aria-label={label} className={clsx("flex items-center justify-center w-full h-[13px] border-b border-[#c2c0c5] last:border-b-0", i === 0 && "bg-white")}>{icon}</button>
        ))}
      </div>
      <span className="absolute right-[4px] top-[210px] bottom-[84px] w-px bg-[#99979c]" />
    </aside>
  );
}

/* ---------- bottom bars ---------- */

function SheetTabs() {
  return (
    <div className="flex h-[10px] border-t border-[#b5b3b8]">
      <div className="flex items-center justify-around w-[34px] bg-[#b9b7bb] text-[#8b898e] text-[5px]">
        {["⏮", "◀", "▶", "⏭"].map((g) => <button key={g} className="font-[DejaVu_Sans] leading-[8px]">{g}</button>)}
      </div>
      <button className="flex items-center gap-[4px] ml-[2px] px-[4px] bg-[#cdcbcf]"><SheetTabIcon />PM009465 - Base Assembly<span className="w-[2px]" /></button>
      <button className="flex items-center px-[4px] bg-white font-bold whitespace-nowrap"><SheetTabIcon />PM009517 - Welded Frame</button>
      <button aria-label="Add sheet" className="flex items-center justify-center w-[21px] bg-[#d8d6da]">
        <Svg className="size-[8px]"><path d="M3 4h8v6H3z" fill="#fff" stroke="#57869c" /><circle cx="3" cy="3.500" r="2.500" fill={GOLD} stroke="none" /></Svg>
      </button>
      <div className="flex-1 ml-[252px] mr-[150px] border-l-2 border-[#9c9a9f] flex items-center pl-[9px]"><span className="h-px w-full bg-[#aaa8ad]" /></div>
    </div>
  );
}

function StatusBar() {
  return (
    <footer className="flex items-center h-[10px] leading-[9px] border-t border-[#b5b3b8] pr-[2px] whitespace-nowrap">
      <span className="flex-1">SOLIDWORKS</span>
      <div className="flex gap-[12px]"><span>-21.7mm</span><span>325.9mm</span></div>
      <span className="ml-[8px]">0mm</span>
      <span className="ml-[11px]">Under Defined</span>
      <span className="ml-[9px]">Editing PM009517 - Welded Frame</span>
      <span className="ml-[18px]">1 : 12</span>
      <span className="ml-[12px] mr-[63px]"><Caret /></span>
      <span>MMGS</span>
      <span className="mx-[12px]"><Caret /></span>
      <Svg className="size-[9px]"><path d="M1 4 6 2l5 3-1 4-5 2-4-3z" fill="#8b8d90" /></Svg>
    </footer>
  );
}

export default function App() {
  return (
    <div className="flex flex-col h-screen overflow-hidden bg-[#faf8fc] text-[#33353a] text-[6px] leading-[8px] font-[Open_Sans,Noto_Sans,sans-serif]">
      <TitleBar />
      <Ribbon />
      <div className="flex flex-1 min-h-0">
        <div className="flex flex-col w-[258px] shrink-0">
          <CommandTabs />
          <div className="flex flex-1 min-h-0">
            <TreePanel />
            <div className="flex-1 bg-linear-to-b from-white to-[#d3d7e8]" />
          </div>
        </div>
        <Canvas />
        <TaskPane />
      </div>
      <SheetTabs />
      <StatusBar />
    </div>
  );
}
